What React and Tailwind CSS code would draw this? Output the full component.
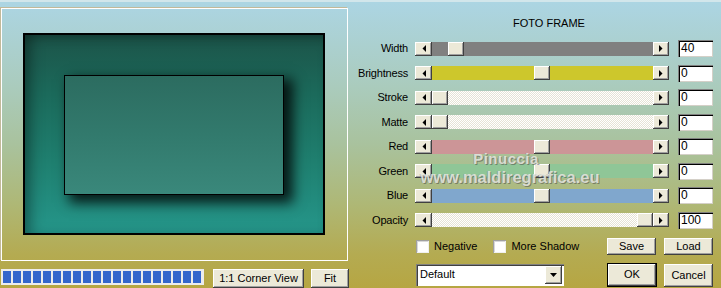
import React from "react";

const bevel =
  "bg-[#ece9d8] shadow-[inset_-1px_-1px_0_#404040,inset_1px_1px_0_#ffffff,inset_-2px_-2px_0_#a0a0a0]";
const checker =
  "bg-[repeating-conic-gradient(#ffffff_0_25%,#e6e3d5_0_50%)] bg-[length:2px_2px]";

const rows = [
  { label: "Width", track: "bg-[#808080]", pos: 16, value: "40" },
  { label: "Brightness", track: "bg-[#cdc72c]", pos: 102, value: "0" },
  { label: "Stroke", track: checker, pos: 0, value: "0" },
  { label: "Matte", track: checker, pos: 0, value: "0" },
  { label: "Red", track: "bg-[#cc9597]", pos: 102, value: "0" },
  { label: "Green", track: "bg-[#8fc697]", pos: 102, value: "0" },
  { label: "Blue", track: "bg-[#80a7cd]", pos: 102, value: "0" },
  { label: "Opacity", track: checker, pos: 205, value: "100" },
];

function Arrow({ dir, w }) {
  return (
    <div className={`${bevel} flex h-full shrink-0 items-center justify-center ${w}`}>
      <svg width="4" height="7" viewBox="0 0 4 7">
        {dir === "left" ? <polygon points="4,0 4,7 0.5,3.5" fill="#000" /> : <polygon points="0,0 0,7 3.5,3.5" fill="#000" />}
      </svg>
    </div>
  );
}

function Slider({ track, pos }) {
  return (
    <div className="flex h-[14px] w-[254px]">
      <Arrow dir="left" w="w-[17px]" />
      <div className={`flex flex-1 ${track}`}>
        <div className={`${bevel} h-full w-[16px]`} style={{ marginLeft: pos }} />
      </div>
      <Arrow dir="right" w="w-[16px]" />
    </div>
  );
}

function Button({ children, className = "" }) {
  return (
    <div className={`${bevel} flex items-center justify-center text-[11px] ${className}`}>
      {children}
    </div>
  );
}

function Check({ label }) {
  return (
    <div className="flex items-center gap-[5px]">
      <div className="h-[13px] w-[13px] bg-white shadow-[inset_1px_1px_0_#a0a0a0,inset_-1px_-1px_0_#f0f0f0,inset_2px_2px_0_#d8d8d8]" />
      <span className="text-[11px]">{label}</span>
    </div>
  );
}

export default function App() {
  return (
    <div className="relative flex h-[288px] w-[721px] overflow-hidden border-t-2 border-[#d2e6eb] bg-[linear-gradient(to_bottom,#acd5e3_0%,#aacbbc_30%,#a9c29d_50%,#aeb877_70%,#b4ab52_88%,#b6a642_100%)] font-['Liberation_Sans',Arial,sans-serif] text-black">
      {/* preview side */}
      <div className="flex w-[350px] shrink-0 flex-col pl-[1px] pt-[6px]">
        <div className="h-[254px] w-[347px] border border-white shadow-[-1px_-1px_0_#c2b99a]">
          <div className="ml-[21px] mt-[24px] h-[202px] w-[302px] border-2 border-black bg-[linear-gradient(to_bottom,#1c5449_0%,#1b6a5b_30%,#1f8070_65%,#25968a_100%)] shadow-[inset_10px_0_14px_-4px_rgba(0,0,0,0.35),inset_0_8px_12px_-6px_rgba(0,0,0,0.25)]">
            <div className="ml-[39px] mt-[40px] h-[120px] w-[220px] border border-black bg-[linear-gradient(to_bottom,#2c6c60,#327a6d_50%,#3a887b)] shadow-[7px_6px_12px_2px_rgba(0,0,0,0.8)]" />
          </div>
        </div>
        <div className="mt-[8px] flex items-start">
          <div className="flex h-[16px] w-[203px] gap-[2px] bg-[#ececec] p-[2px]">
            {Array.from({ length: 20 }).map((_, i) => (
              <div key={i} className="h-full w-[8px] bg-[#3366cc]" />
            ))}
          </div>
          <Button className="ml-[9px] h-[19px] w-[91px]">1:1 Corner View</Button>
          <Button className="ml-[7px] h-[19px] w-[38px]">Fit</Button>
        </div>
      </div>

      {/* controls side */}
      <div className="flex flex-1 flex-col pt-[15px]">
        <div className="pl-[163px] text-[11px] leading-[13px]">FOTO FRAME</div>
        <div className="mt-[10px] flex flex-col gap-[7.5px]">
          {rows.map((r) => (
            <div key={r.label} className="flex h-[17px] items-center">
              <div className="w-[58px] text-right text-[11px] tracking-[-0.2px]">{r.label}</div>
              <div className="ml-[7px]">
                <Slider track={r.track} pos={r.pos} />
              </div>
              <div className="ml-[9px] h-[17px] w-[35px] bg-white pl-[3px] text-[12px] leading-[17px] shadow-[inset_1px_1px_0_#808080,inset_2px_2px_0_#000000,inset_-1px_-1px_0_#d4d0c8]">
                {r.value}
              </div>
            </div>
          ))}
        </div>
        <div className="ml-[66px] mt-[9px] flex">
          <div className="flex w-[191px] flex-col">
            <div className="flex h-[17px] items-center gap-[16px]">
              <Check label="Negative" />
              <Check label="More Shadow" />
            </div>
            <div className="mt-[9px] flex h-[22px] w-[148px] items-center bg-white pl-[4px] shadow-[inset_1px_1px_0_#808080,inset_2px_2px_0_#404040,inset_-1px_-1px_0_#ffffff]">
              <span className="flex-1 text-[11px]">Default</span>
              <div className={`${bevel} mr-[2px] flex h-[18px] w-[17px] items-center justify-center`}>
                <svg width="7" height="4" viewBox="0 0 7 4">
                  <polygon points="0,0 7,0 3.5,4" fill="#000" />
                </svg>
              </div>
            </div>
          </div>
          <div className="flex flex-col">
            <div className="flex gap-[8px]">
              <Button className="h-[17px] w-[49px]">Save</Button>
              <Button className="h-[17px] w-[49px]">Load</Button>
            </div>
            <div className="mt-[8px] flex items-start gap-[7px]">
              <Button className="h-[24px] w-[50px] border border-black">OK</Button>
              <Button className="mt-[1px] h-[23px] w-[49px]">Cancel</Button>
            </div>
          </div>
        </div>
      </div>

      {/* watermark */}
      <div className="pointer-events-none absolute left-[420px] top-[149px] flex w-[180px] flex-col items-center leading-none text-[#e8eae2]/85 [text-shadow:1px_1px_0_rgba(70,70,70,0.5),-1px_0_0_rgba(120,120,120,0.35)]">
        <span className="mr-[8px] text-[15px] font-bold tracking-[0.5px]">Pinuccia</span>
        <span className="mt-[3px] text-[16.5px] font-bold">www.maldiregrafica.eu</span>
      </div>
    </div>
  );
}
